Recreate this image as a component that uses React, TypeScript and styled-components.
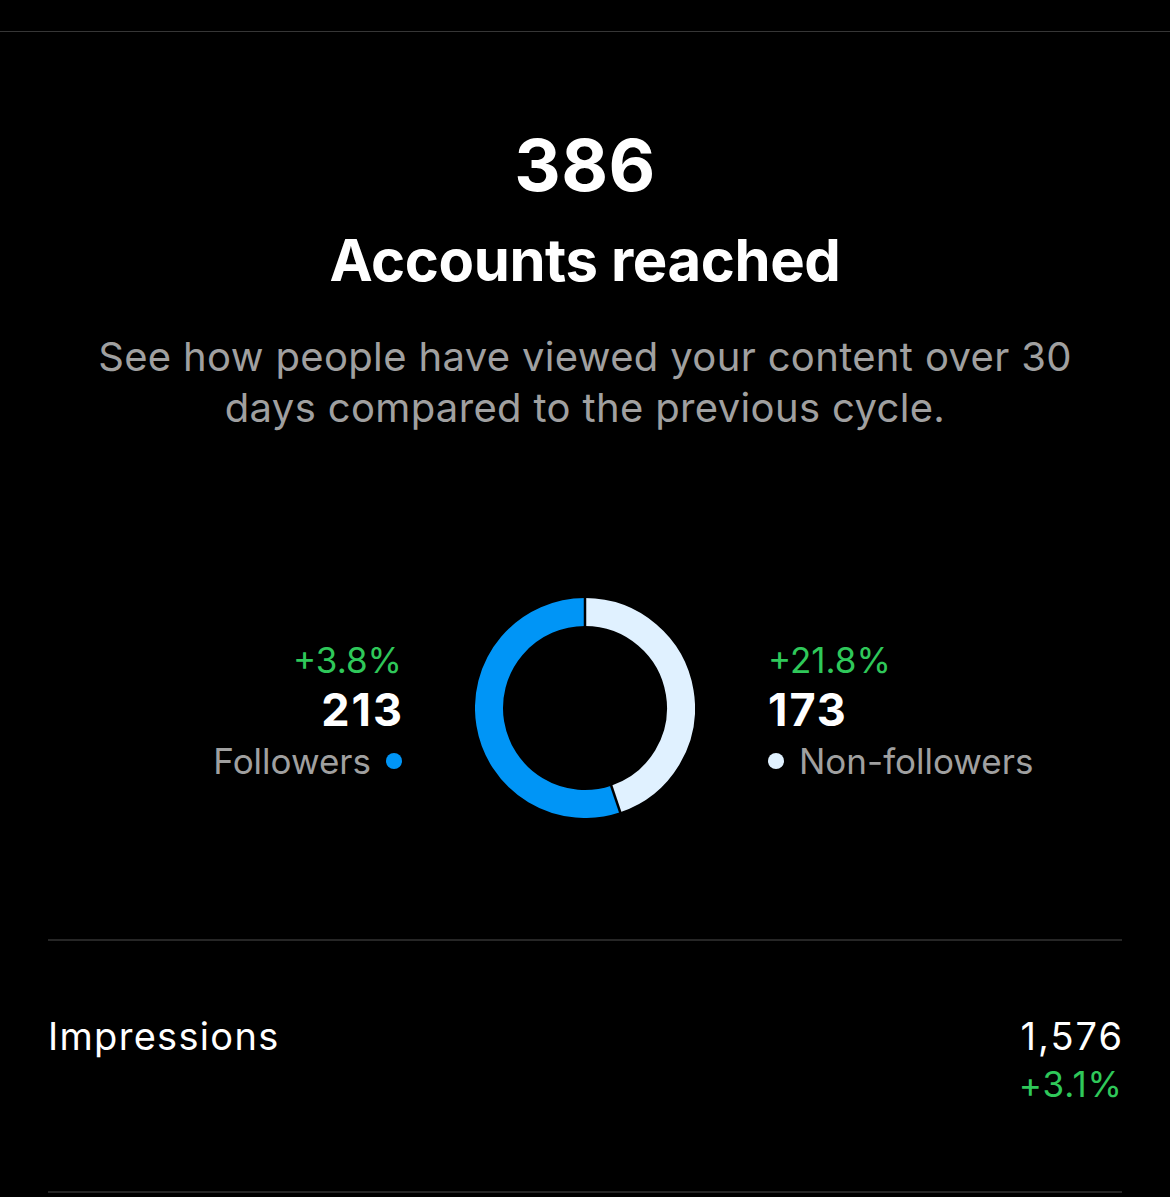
import React from "react";
import styled, { createGlobalStyle } from "styled-components";

const Global = createGlobalStyle`
  html, body { margin: 0; padding: 0; background: #000; }
  body { font-family: Inter, "Noto Sans", sans-serif; -webkit-font-smoothing: antialiased; }
`;

const Page = styled.div`
  width: 1170px;
  min-height: 1197px;
  background: #000;
  color: #fff;
  display: flex;
  flex-direction: column;
  padding-top: 31px;
  box-sizing: border-box;
`;

const TopRule = styled.div`
  height: 1px;
  background: #363636;
`;

const Hero = styled.section`
  display: flex;
  flex-direction: column;
  align-items: center;
  text-align: center;
  padding-top: 97px;
`;

const BigNumber = styled.div`
  font-size: 72px;
  font-weight: 700;
  line-height: 72px;
  letter-spacing: 0.5px;
`;

const Title = styled.h1`
  margin: 24px 0 0;
  font-size: 58px;
  font-weight: 700;
  line-height: 70px;
  letter-spacing: -0.4px;
`;

const Subtitle = styled.p`
  margin: 36px 0 0;
  width: 1000px;
  font-size: 40px;
  line-height: 51px;
  letter-spacing: 0.35px;
  color: #a0a0a0;
  font-weight: 400;
`;

const ChartRow = styled.div`
  display: grid;
  grid-template-columns: 1fr 220px 1fr;
  column-gap: 73px;
  align-items: center;
  margin-top: 165px;
`;

const Stat = styled.div<{ $align: "left" | "right" }>`
  display: flex;
  flex-direction: column;
  align-items: ${(p) => (p.$align === "right" ? "flex-end" : "flex-start")};
  padding-top: 6px;
`;

const Change = styled.div`
  color: #2fc85a;
  font-size: 35px;
  line-height: 48px;
`;

const Count = styled.div`
  font-size: 45px;
  font-weight: 700;
  line-height: 52px;
  letter-spacing: 2px;
  margin-right: -2px;
`;

const Legend = styled.div`
  display: flex;
  align-items: center;
  gap: 15px;
  color: #a0a0a0;
  font-size: 35px;
  line-height: 50px;
`;

const Dot = styled.span<{ $color: string }>`
  width: 16px;
  height: 16px;
  border-radius: 50%;
  background: ${(p) => p.$color};
  display: inline-block;
`;

const Divider = styled.div`
  height: 2px;
  background: #262626;
  margin: 0 48px;
`;

const Spacer = styled.div`
  height: 121px;
`;

const MetricRow = styled.div`
  display: flex;
  justify-content: space-between;
  align-items: flex-start;
  padding: 70px 48px 0;
  height: 250px;
  box-sizing: border-box;
`;

const MetricLabel = styled.div`
  font-size: 38px;
  line-height: 50px;
  letter-spacing: 1.3px;
`;

const MetricValues = styled.div`
  display: flex;
  flex-direction: column;
  align-items: flex-end;
`;

const MetricValue = styled.div`
  font-size: 38px;
  line-height: 50px;
  letter-spacing: 2px;
  margin-right: -2px;
`;

const MetricChange = styled.div`
  font-size: 35px;
  line-height: 46px;
  letter-spacing: 1px;
  margin-right: -1px;
  color: #2fc85a;
`;

function Donut({ followers, nonFollowers }: { followers: number; nonFollowers: number }) {
  const total = followers + nonFollowers;
  const cx = 110;
  const cy = 110;
  const r = 96;
  const sw = 28;
  const frac = nonFollowers / total;
  const a = frac * Math.PI * 2;
  const ex = cx + r * Math.sin(a);
  const ey = cy - r * Math.cos(a);
  const large = frac > 0.5 ? 1 : 0;
  const largeB = frac > 0.5 ? 0 : 1;
  const sep = (ang: number) => {
    const x1 = cx + (r - sw / 2 - 1) * Math.sin(ang);
    const y1 = cy - (r - sw / 2 - 1) * Math.cos(ang);
    const x2 = cx + (r + sw / 2 + 1) * Math.sin(ang);
    const y2 = cy - (r + sw / 2 + 1) * Math.cos(ang);
    return <line x1={x1} y1={y1} x2={x2} y2={y2} stroke="#000" strokeWidth={2.5} />;
  };
  return (
    <svg width="220" height="220" viewBox="0 0 220 220">
      <path
        d={`M ${cx} ${cy - r} A ${r} ${r} 0 ${large} 1 ${ex} ${ey}`}
        fill="none"
        stroke="#e0f1ff"
        strokeWidth={sw}
      />
      <path
        d={`M ${ex} ${ey} A ${r} ${r} 0 ${largeB} 1 ${cx} ${cy - r}`}
        fill="none"
        stroke="#0095f6"
        strokeWidth={sw}
      />
      {sep(0)}
      {sep(a)}
    </svg>
  );
}

export default function App() {
  return (
    <>
      <Global />
      <Page>
        <TopRule />
        <Hero>
          <BigNumber>386</BigNumber>
          <Title>Accounts reached</Title>
          <Subtitle>
            See how people have viewed your content over 30 days compared to the previous cycle.
          </Subtitle>
        </Hero>
        <ChartRow>
          <Stat $align="right">
            <Change>+3.8%</Change>
            <Count>213</Count>
            <Legend>
              Followers <Dot $color="#0095f6" />
            </Legend>
          </Stat>
          <Donut followers={213} nonFollowers={173} />
          <Stat $align="left">
            <Change>+21.8%</Change>
            <Count>173</Count>
            <Legend>
              <Dot $color="#e0f1ff" /> Non-followers
            </Legend>
          </Stat>
        </ChartRow>
        <Spacer />
        <Divider />
        <MetricRow>
          <MetricLabel>Impressions</MetricLabel>
          <MetricValues>
            <MetricValue>1,576</MetricValue>
            <MetricChange>+3.1%</MetricChange>
          </MetricValues>
        </MetricRow>
        <Divider />
      </Page>
    </>
  );
}
